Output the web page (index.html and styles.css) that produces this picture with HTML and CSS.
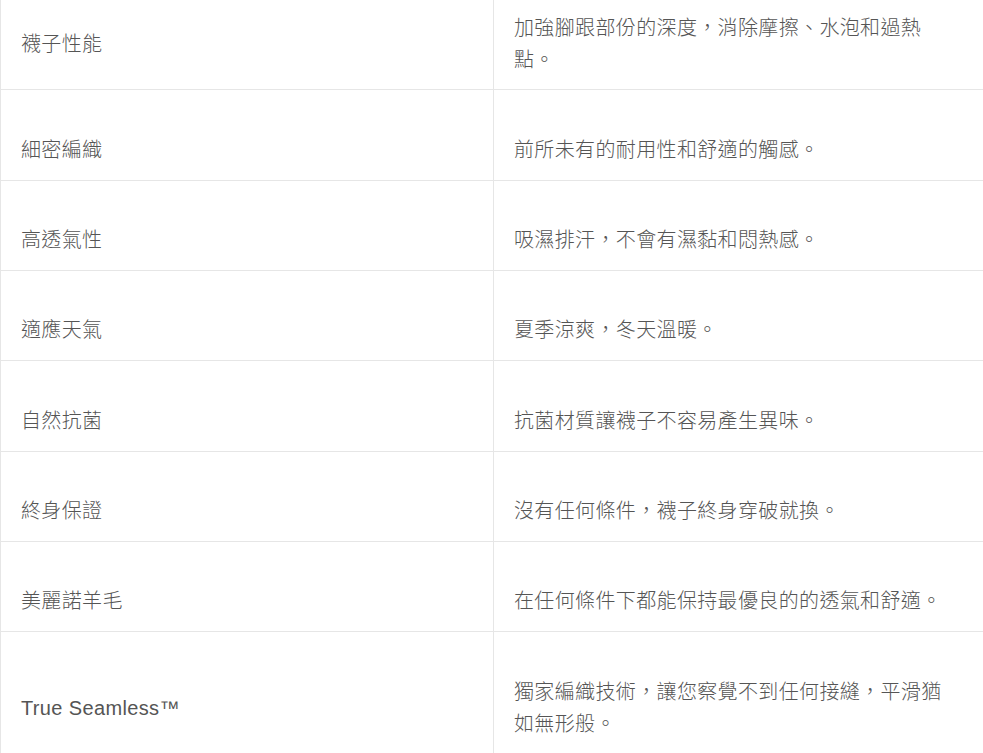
FILE: index.html
```html
<!DOCTYPE html>
<html lang="zh-Hant">
<head>
<meta charset="utf-8">
<link rel="stylesheet" href="styles.css">
</head>
<body>
<table class="spec">
  <colgroup><col class="c1"><col class="c2"></colgroup>
  <tbody>
    <tr><td>襪子性能</td><td>加強腳跟部份的深度，消除摩擦、水泡和過熱點。</td></tr>
    <tr><td>細密編織</td><td>前所未有的耐用性和舒適的觸感。</td></tr>
    <tr><td>高透氣性</td><td>吸濕排汗，不會有濕黏和悶熱感。</td></tr>
    <tr><td>適應天氣</td><td>夏季涼爽，冬天溫暖。</td></tr>
    <tr><td>自然抗菌</td><td>抗菌材質讓襪子不容易產生異味。</td></tr>
    <tr><td>終身保證</td><td>沒有任何條件，襪子終身穿破就換。</td></tr>
    <tr><td>美麗諾羊毛</td><td>在任何條件下都能保持最優良的的透氣和舒適。</td></tr>
    <tr><td>True Seamless™</td><td>獨家編織技術，讓您察覺不到任何接縫，平滑猶如無形般。</td></tr>
  </tbody>
</table>
</body>
</html>
```
FILE: styles.css
```css
html, body {
  margin: 0;
  padding: 0;
  background: #fff;
  overflow: hidden;
}
.spec {
  border-collapse: collapse;
  table-layout: fixed;
  width: 1000px;
  margin-top: -33px;
  font-family: "Liberation Sans", "Noto Sans CJK TC", sans-serif;
  font-size: 20px;
  font-weight: 300;
  line-height: 32px;
  letter-spacing: 0.36px;
  color: #555;
}
.c1 { width: 493px; }
.c2 { width: 507px; }
.spec td {
  border: 1px solid #e6e6e6;
  padding: 43.5px 20px 13.83px 20px;
  vertical-align: middle;
  text-align: left;
}
.spec td:last-child {
  padding-right: 45px;
}
```
